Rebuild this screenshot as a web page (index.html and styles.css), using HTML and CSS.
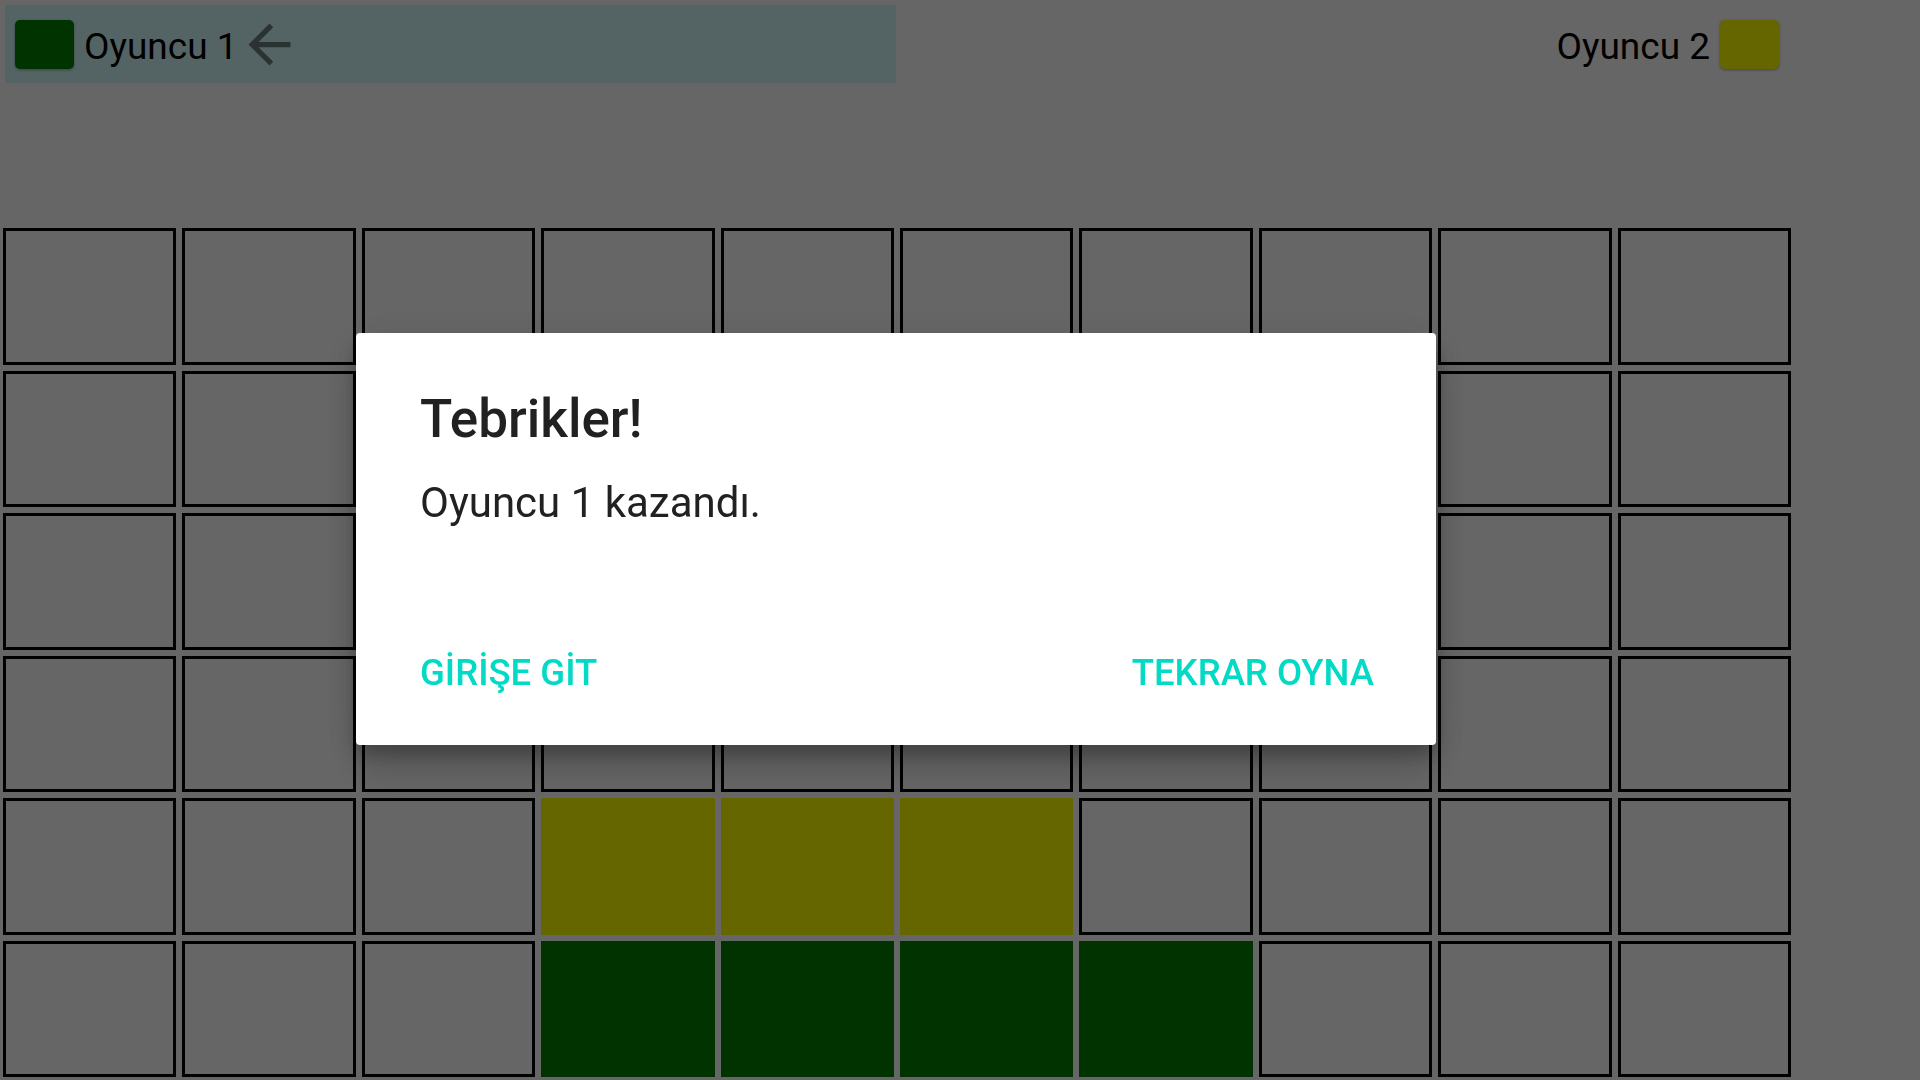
FILE: index.html
```html
<!DOCTYPE html>
<html lang="tr">
<head>
<meta charset="utf-8">
<title>Oyun</title>
<link rel="stylesheet" href="styles.css">
</head>
<body>
<div class="app">
  <main class="main">
    <header class="players">
      <div class="player player--active">
        <span class="chip chip--green"></span>
        <span class="player-name">Oyuncu 1</span>
        <svg class="turn-arrow" viewBox="0 0 24 24" aria-hidden="true"><path d="M20 11H7.83l5.59-5.59L12 4l-8 8 8 8 1.41-1.41L7.83 13H20v-2z"/></svg>
      </div>
      <div class="player player--right">
        <span class="player-name">Oyuncu 2</span>
        <span class="chip chip--yellow"></span>
      </div>
    </header>
    <section class="board">
      <div class="cell"></div><div class="cell"></div><div class="cell"></div><div class="cell"></div><div class="cell"></div><div class="cell"></div><div class="cell"></div><div class="cell"></div><div class="cell"></div><div class="cell"></div>
      <div class="cell"></div><div class="cell"></div><div class="cell"></div><div class="cell"></div><div class="cell"></div><div class="cell"></div><div class="cell"></div><div class="cell"></div><div class="cell"></div><div class="cell"></div>
      <div class="cell"></div><div class="cell"></div><div class="cell"></div><div class="cell"></div><div class="cell"></div><div class="cell"></div><div class="cell"></div><div class="cell"></div><div class="cell"></div><div class="cell"></div>
      <div class="cell"></div><div class="cell"></div><div class="cell"></div><div class="cell"></div><div class="cell"></div><div class="cell"></div><div class="cell"></div><div class="cell"></div><div class="cell"></div><div class="cell"></div>
      <div class="cell"></div><div class="cell"></div><div class="cell"></div><div class="cell cell--yellow"></div><div class="cell cell--yellow"></div><div class="cell cell--yellow"></div><div class="cell"></div><div class="cell"></div><div class="cell"></div><div class="cell"></div>
      <div class="cell"></div><div class="cell"></div><div class="cell"></div><div class="cell cell--green"></div><div class="cell cell--green"></div><div class="cell cell--green"></div><div class="cell cell--green"></div><div class="cell"></div><div class="cell"></div><div class="cell"></div>
    </section>
  </main>
  <aside class="side"></aside>
</div>

<div class="scrim">
  <div class="dialog" role="dialog">
    <h2 class="dialog-title">Tebrikler!</h2>
    <p class="dialog-message">Oyuncu 1 kazandı.</p>
    <div class="dialog-actions">
      <button class="dialog-btn">GİRİŞE GİT</button>
      <button class="dialog-btn">TEKRAR OYNA</button>
    </div>
  </div>
</div>
</body>
</html>
```

FILE: styles.css
```css
html, body {
  margin: 0;
  padding: 0;
  width: 1920px;
  height: 1080px;
  overflow: hidden;
  background: #ffffff;
  font-family: Roboto, "Noto Sans", "Liberation Sans", sans-serif;
}

.app {
  display: flex;
  width: 1920px;
  height: 1080px;
}

.main {
  width: 1794px;
  display: flex;
  flex-direction: column;
}

.side {
  flex: 1;
}

.players {
  display: grid;
  grid-template-columns: 891px 891px;
  column-gap: 5px;
  padding: 5px 0 0 5px;
}

.player {
  height: 78px;
  display: flex;
  align-items: center;
  padding: 0 10px;
  box-sizing: border-box;
}

.player--active {
  background: #d2fafa;
}

.player--right {
  justify-content: flex-end;
  padding-right: 13px;
}

.chip {
  width: 59px;
  height: 49px;
  border-radius: 5px;
  box-shadow: 0 1px 3px rgba(0, 0, 0, 0.35);
}

.chip--green { background: #008000; }
.chip--yellow { background: #ffff00; }

.player-name {
  font-size: 37px;
  color: #000;
  margin: 6px 10px 0;
  line-height: 44px;
}

.player--active .player-name {
  margin-right: 0;
}

.turn-arrow {
  width: 63px;
  height: 63px;
  fill: rgba(0, 0, 0, 0.5);
}

.board {
  margin-top: 142px;
  width: 1794px;
  height: 855px;
  box-sizing: border-box;
  padding: 3px;
  display: grid;
  grid-template-columns: repeat(10, 1fr);
  grid-template-rows: repeat(6, 1fr);
  gap: 6px;
}

.cell {
  border: 3px solid #000;
  background: #ffffff;
}

.cell--yellow {
  background: #ffff00;
  border-color: #ffff00;
}

.cell--green {
  background: #008000;
  border-color: #008000;
}

.scrim {
  position: fixed;
  inset: 0;
  background: rgba(0, 0, 0, 0.6);
  display: flex;
  align-items: center;
  justify-content: center;
  padding-right: 128px;
  padding-bottom: 2px;
}

.dialog {
  width: 1080px;
  height: 412px;
  box-sizing: border-box;
  background: #ffffff;
  border-radius: 4px;
  padding: 54px 62px 48px 64px;
  display: flex;
  flex-direction: column;
  box-shadow: 0 11px 15px rgba(0, 0, 0, 0.2), 0 24px 38px rgba(0, 0, 0, 0.14), 0 9px 46px rgba(0, 0, 0, 0.12);
}

.dialog-title {
  margin: 0;
  font-size: 53px;
  line-height: 64px;
  font-weight: 500;
  color: #212121;
}

.dialog-message {
  margin: 24px 0 0;
  font-size: 42px;
  line-height: 56px;
  color: #212121;
}

.dialog-actions {
  margin-top: auto;
  display: flex;
  justify-content: space-between;
}

.dialog-btn {
  border: 0;
  background: none;
  padding: 0;
  font-family: Roboto, "Noto Sans", "Liberation Sans", sans-serif;
  font-size: 36.5px;
  line-height: 48px;
  font-weight: 500;
  color: #03dac5;
  cursor: pointer;
}
```
